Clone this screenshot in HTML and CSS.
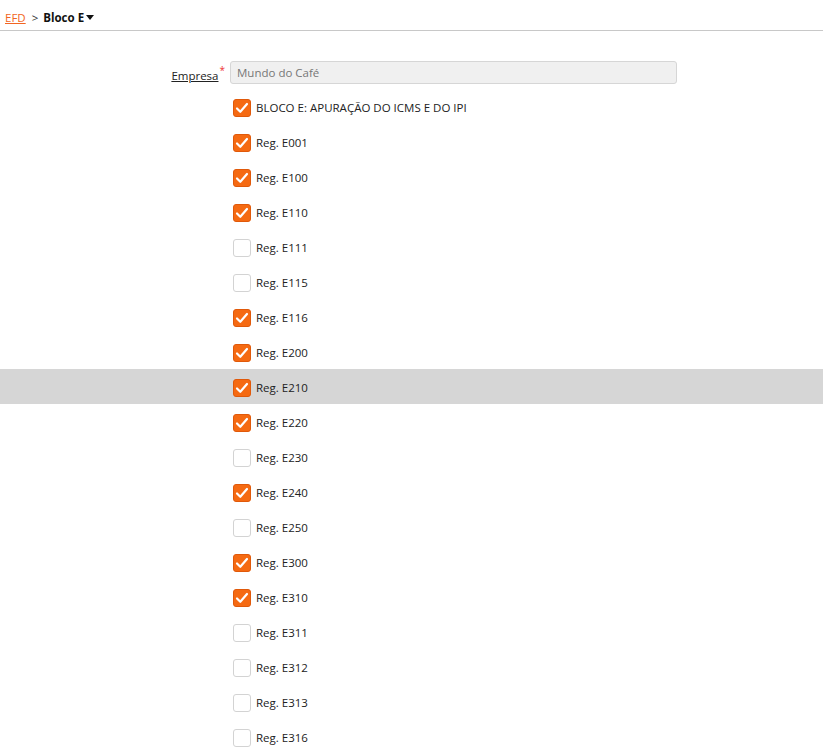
FILE: index.html
```html
<html>
<head>
  <meta charset="utf-8">
  <title>EFD - Bloco E</title>
  <link rel="stylesheet" href="styles.css">
</head>
<body>
  <div class="topbar">
    <a class="crumb" href="#">EFD</a>
    <span class="sep">&gt;</span>
    <span class="current">Bloco E</span>
    <span class="caret"></span>
  </div>

  <div class="form">
    <div class="field">
      <label class="label"><u>Empresa</u><span class="req">*</span></label>
      <input class="input" type="text" value="Mundo do Café" readonly>
    </div>
    <div id="rows"></div>
  </div>

  <script>
    const regs = [
      ['BLOCO E: APURAÇÃO DO ICMS E DO IPI', true],
      ['Reg. E001', true], ['Reg. E100', true], ['Reg. E110', true],
      ['Reg. E111', false], ['Reg. E115', false], ['Reg. E116', true],
      ['Reg. E200', true], ['Reg. E210', true], ['Reg. E220', true],
      ['Reg. E230', false], ['Reg. E240', true], ['Reg. E250', false],
      ['Reg. E300', true], ['Reg. E310', true], ['Reg. E311', false],
      ['Reg. E312', false], ['Reg. E313', false], ['Reg. E316', false]
    ];
    const tick = '<svg width="18" height="18" viewBox="0 0 18 18"><path d="M4 9.5l3.3 3.3L14 5" fill="none" stroke="#fff" stroke-width="2.2" stroke-linecap="round" stroke-linejoin="round"/></svg>';
    const rows = document.getElementById('rows');
    regs.forEach(([name, on]) => {
      const row = document.createElement('div');
      row.className = 'row' + (name === 'Reg. E210' ? ' hover' : '');
      row.innerHTML = '<div class="inner"><span class="box' + (on ? ' checked' : '') + '">' + (on ? tick : '') + '</span><span class="text">' + name + '</span></div>';
      row.onclick = () => {
        const box = row.querySelector('.box');
        box.classList.toggle('checked');
        box.innerHTML = box.classList.contains('checked') ? tick : '';
      };
      rows.appendChild(row);
    });
  </script>
</body>
</html>
```
FILE: styles.css
```css
html, body {
  margin: 0;
  padding: 0;
}
body {
  font: 11.5px "Open Sans", sans-serif;
  color: #222;
  background: #fff;
}
.topbar {
  height: 31px;
  box-sizing: border-box;
  padding: 5px 0 0 5px;
  border-bottom: 1px solid #c8c8c8;
  display: flex;
  align-items: center;
  gap: 5px;
}
.crumb {
  color: #f26522;
  text-decoration: underline;
}
.sep {
  color: #333;
  margin-left: 1px;
}
.current {
  font-weight: bold;
  color: #111;
}
.caret {
  width: 0;
  height: 0;
  border-left: 4px solid transparent;
  border-right: 4px solid transparent;
  border-top: 5px solid #111;
  margin-left: -3px;
}
.form {
  padding-top: 30px;
}
.field {
  display: flex;
  align-items: center;
  margin-bottom: 5px;
}
.label {
  width: 230px;
  text-align: right;
  color: #222;
  padding-right: 5px;
  box-sizing: border-box;
}
.req {
  color: #e33;
  font-size: 10px;
  vertical-align: 6px;
  margin-left: 1px;
}
.input {
  width: 447px;
  height: 23px;
  box-sizing: border-box;
  border: 1px solid #d6d6d6;
  border-radius: 3px;
  background: #f0f0f0;
  color: #777;
  font: 11.5px "Open Sans", sans-serif;
  padding: 0 6px;
  outline: none;
}
.row {
  height: 35px;
  box-sizing: border-box;
  padding-top: 2px;
  display: flex;
  align-items: center;
  cursor: pointer;
}
.row.hover {
  background: #d6d6d6;
}
.inner {
  display: flex;
  align-items: center;
  padding-left: 233px;
  gap: 5px;
}
.box {
  width: 18px;
  height: 18px;
  box-sizing: border-box;
  border: 1px solid #d3d3d3;
  border-radius: 3px;
  background: #fff;
  display: flex;
  align-items: center;
  justify-content: center;
}
.box.checked {
  background: #f56a12;
  border-color: #e0590a;
}
.box svg {
  display: block;
  margin: -1px;
}
.text {
  color: #222;
}
```
